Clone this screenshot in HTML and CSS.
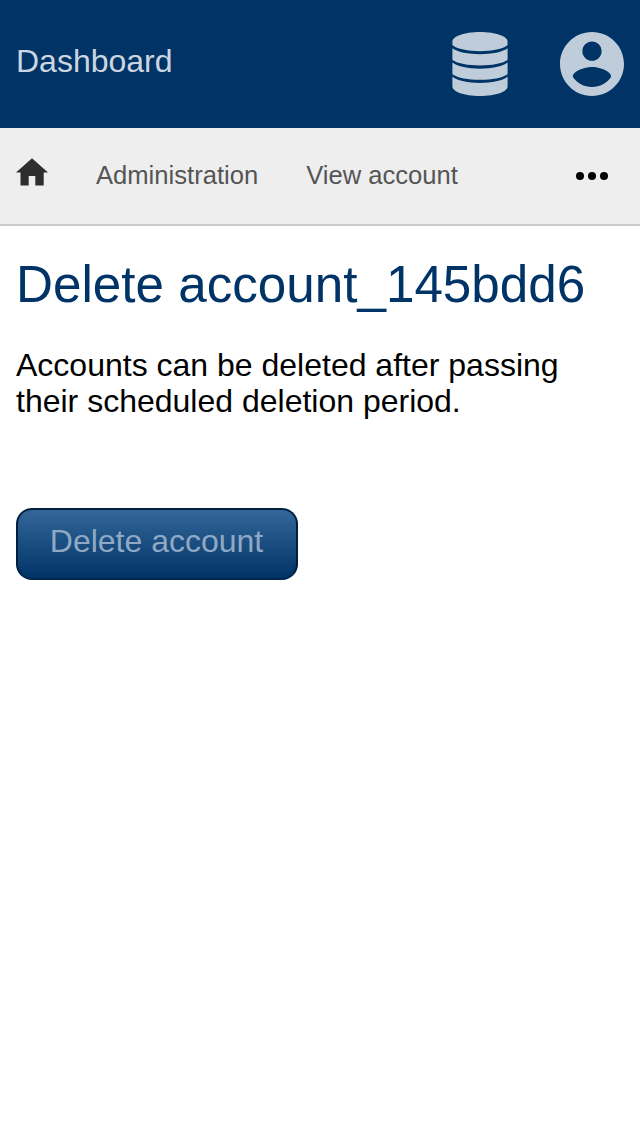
FILE: index.html
```html
<!DOCTYPE html>
<html lang="en">
<head>
<meta charset="utf-8">
<title>Delete account</title>
<link rel="stylesheet" href="styles.css">
</head>
<body>
<header class="topbar">
  <span class="brand">Dashboard</span>
  <div class="actions">
    <svg class="db-icon" viewBox="0 0 56 64" aria-hidden="true">
      <path d="M.4 9.500C.4 4.500 12 0 28 0S55.600 4.500 55.600 9.500V13C51 17 40 19.200 28 19.200S5 17 .4 13Z"/>
      <path d="M.4 16.300C6 20.300 16 22.200 28 22.200S50 20.300 55.600 16.300V28C50 31.700 40 33.400 28 33.400S6 31.700 .4 28Z"/>
      <path d="M.4 30.600C6 34.600 16 36.700 28 36.700S50 34.600 55.600 30.600V42.200C50 46 40 47.800 28 47.800S6 46 .4 42.200Z"/>
      <path d="M.4 44.800C6 48.800 16 50.900 28 50.900S50 48.800 55.600 44.800V54.500C55.600 59.500 44 64 28 64S.4 59.500 .4 54.500Z"/>
    </svg>
    <svg class="user-icon" viewBox="2 2 20 20" aria-hidden="true">
      <path d="M12 2C6.480 2 2 6.480 2 12s4.480 10 10 10 10-4.480 10-10S17.520 2 12 2zm0 3c1.660 0 3 1.340 3 3s-1.340 3-3 3-3-1.340-3-3 1.340-3 3-3zm0 14.200c-2.500 0-4.710-1.280-6-3.220.030-1.990 4-3.080 6-3.080 1.990 0 5.970 1.090 6 3.080-1.290 1.940-3.500 3.220-6 3.220z"/>
    </svg>
  </div>
</header>
<nav class="crumbs">
  <svg class="home-icon" viewBox="0 0 32 28" aria-hidden="true"><path d="M16 .3L32 14.600H27.700V27.600H19.300V18H12.700V27.600H4.500V14.600H0Z"/></svg>
  <span class="crumb">Administration</span>
  <span class="crumb">View account</span>
  <svg class="more-icon" viewBox="0 0 32 8" aria-hidden="true"><circle cx="4" cy="4" r="4"/><circle cx="16" cy="4" r="4"/><circle cx="28" cy="4" r="4"/></svg>
</nav>
<main class="content">
  <h1 class="title">Delete account_145bdd6</h1>
  <p class="note">Accounts can be deleted after passing their scheduled deletion period.</p>
  <button class="delete" disabled>Delete account</button>
</main>
</body>
</html>
```
FILE: styles.css
```css
* { box-sizing: border-box; }
body {
  margin: 0;
  background: #fff;
  color: #000;
  font-family: "Liberation Sans", Arial, sans-serif;
  font-size: 32px;
}
.topbar {
  display: flex;
  justify-content: space-between;
  height: 128px;
  padding: 32px 16px;
  background: #003366;
}
.brand { color: #ccd6e0; line-height: 58px; }
.actions { display: flex; gap: 52px; }
.db-icon { width: 56px; height: 64px; fill: #bfccd9; }
.user-icon { width: 64px; height: 64px; fill: #bfccd9; }
.crumbs {
  display: flex;
  align-items: center;
  gap: 48px;
  height: 98px;
  padding: 0 32px 2px 16px;
  background: #eee;
  border-bottom: 2px solid #ccc;
}
.home-icon { width: 32px; height: 28px; margin-bottom: 6px; fill: #2e2e2e; }
.crumb { color: #555; font-size: 25.600px; }
.more-icon { width: 32px; height: 8px; margin: 2px 0 0 auto; }
.content { padding: 29px 16px; }
.title {
  margin: 0;
  color: #003366;
  font-size: 51.200px;
  font-weight: 400;
  line-height: 59px;
}
.note { margin: 33px 0 89px; line-height: 36px; }
.delete {
  display: block;
  width: 282px;
  height: 72px;
  padding: 0 1px 6px 0;
  border: 2px solid #001f3d;
  border-bottom-color: #00264d;
  border-radius: 16px;
  background: linear-gradient(#336699, #003366);
  color: #8fa9c4;
  font: inherit;
}
```
